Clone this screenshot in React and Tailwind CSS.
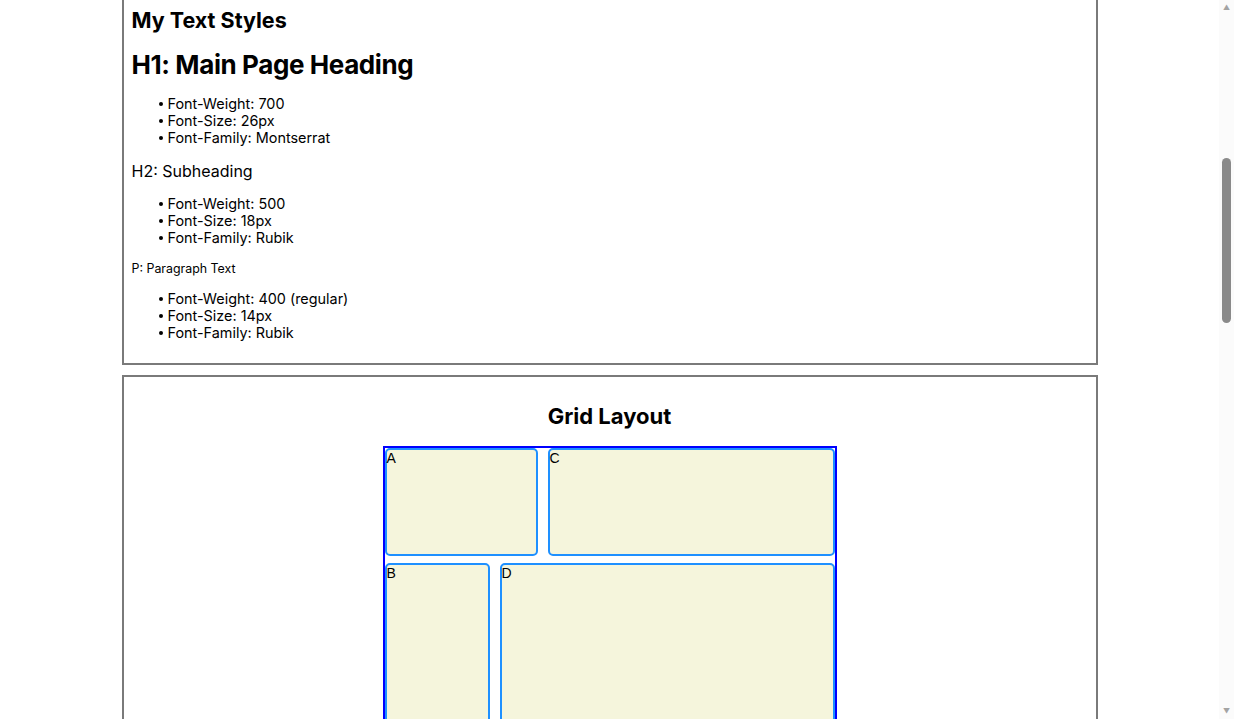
import React from "react";

const rubik = { fontFamily: "Inter, 'Noto Sans', sans-serif" };

function Bullets({ items }) {
  return (
    <ul className="pl-9 text-[14.4px] leading-[17px]">
      {items.map((t) => (
        <li key={t} className="relative">
          <span className="absolute left-[-9px] top-[7px] w-[4px] h-[4px] rounded-full bg-black" />
          {t}
        </li>
      ))}
    </ul>
  );
}

function Cell({ label, className }) {
  return (
    <div
      className={`bg-[#f5f5dc] border-2 border-[#1e90ff] rounded-[5px] text-[14px] leading-[16px] ${className}`}
      style={{ fontFamily: "'Liberation Sans', Arial, sans-serif" }}
    >
      {label}
    </div>
  );
}

// the window's scrollbar, as it shows in the shot
function ScrollBar() {
  return (
    <div className="w-[15px] h-[719px] bg-[#fbfbfb] flex flex-col items-center">
      <div className="h-[15px] flex items-center justify-center text-[7px] text-[#a3a3a3] leading-none">▲</div>
      <div className="flex-1 w-full px-[3px] pt-[143px]">
        <div className="h-[165px] rounded-full bg-[#8a8a8a]" />
      </div>
      <div className="h-[15px] flex items-center justify-center text-[7px] text-[#a3a3a3] leading-none">▼</div>
    </div>
  );
}

export default function App() {
  return (
    <div className="h-[719px] overflow-hidden bg-white text-black flex" style={rubik}>
      <main className="w-[1219px] shrink-0">
        <div className="w-[976px] mx-auto flex flex-col gap-[10px]">
          {/* text styles card, its top is scrolled off */}
          <section className="border-2 border-t-0 border-[#7a7a7a] px-2 pt-2 pb-[22px]">
            <h2 className="text-[21.5px] leading-[24px] font-bold">My Text Styles</h2>

            <h1 className="mt-[17px] text-[26px] leading-[32px] font-bold tracking-[-0.4px]">
              H1: Main Page Heading
            </h1>
            <div className="mt-[14px]">
              <Bullets items={["Font-Weight: 700", "Font-Size: 26px", "Font-Family: Montserrat"]} />
            </div>

            <h3 className="mt-[14px] text-[16px] leading-[22px] font-normal">H2: Subheading</h3>
            <div className="mt-[13px]">
              <Bullets items={["Font-Weight: 500", "Font-Size: 18px", "Font-Family: Rubik"]} />
            </div>

            <p className="mt-[15px] text-[12.4px] leading-[15px]">P: Paragraph Text</p>
            <div className="mt-[14px]">
              <Bullets items={["Font-Weight: 400 (regular)", "Font-Size: 14px", "Font-Family: Rubik"]} />
            </div>
          </section>

          {/* grid demo */}
          <section className="border-2 border-[#7a7a7a] pt-[26px] pb-6">
            <h2 className="text-center text-[22px] leading-[26px] font-bold">Grid Layout</h2>
            <div className="mt-[17px] mx-auto w-[454px] border-2 border-[#0000ff] grid grid-cols-[105px_38px_1fr] grid-rows-[108px_230px] gap-x-[10px] gap-y-[7px]">
              <Cell label="A" className="col-span-2" />
              <Cell label="C" />
              <Cell label="B" />
              <Cell label="D" className="col-span-2" />
            </div>
          </section>
        </div>
      </main>
      <ScrollBar />
    </div>
  );
}
